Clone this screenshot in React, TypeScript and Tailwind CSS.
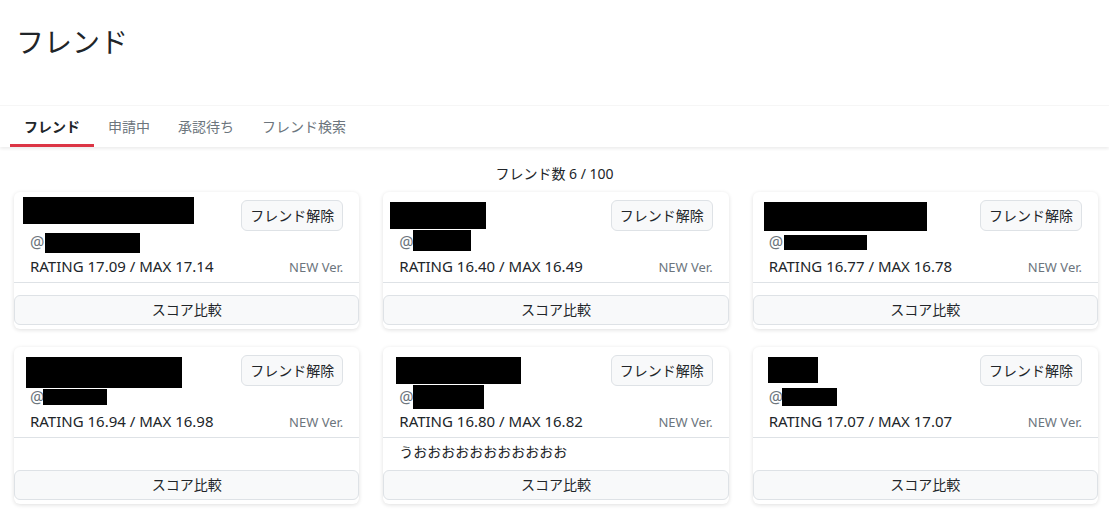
import React from "react";

type Friend = {
  rating: string;
  max: string;
  comment?: string;
  // redaction boxes, relative to card
  nameBox: [number, number, number, number];
  idBox: [number, number, number, number];
};

const friends: Friend[] = [
  { rating: "17.09", max: "17.14", nameBox: [9, 5, 171, 27], idBox: [31, 41, 95, 20] },
  { rating: "16.40", max: "16.49", nameBox: [7, 10, 96, 27], idBox: [30, 38, 58, 21] },
  { rating: "16.77", max: "16.78", nameBox: [11, 10, 163, 29], idBox: [31, 43, 83, 15] },
  { rating: "16.94", max: "16.98", nameBox: [12, 10, 156, 31], idBox: [29, 42, 64, 16] },
  {
    rating: "16.80",
    max: "16.82",
    comment: "うおおおおおおおおおおお",
    nameBox: [13, 10, 125, 27],
    idBox: [30, 38, 71, 24],
  },
  { rating: "17.07", max: "17.07", nameBox: [15, 10, 50, 26], idBox: [29, 41, 55, 18] },
];

const tabs = ["フレンド", "申請中", "承認待ち", "フレンド検索"];

function FriendCard({ f }: { f: Friend }) {
  return (
    <div className="relative flex flex-col rounded-md bg-white pb-1 shadow-[0_1px_4px_rgba(0,0,0,0.13)]">
      {/* header */}
      <div className="flex justify-between px-4 pt-2 pb-1">
        <div className="flex flex-col">
          <div className="h-[30px]" />
          <div className="text-base leading-6 text-[#6c757d]">@</div>
          <div className="text-[15px] leading-6 text-[#212529]">
            RATING {f.rating} / MAX {f.max}
          </div>
        </div>
        <div className="flex flex-col items-end justify-between">
          <button className="h-[31px] rounded-md border border-[#dee2e6] bg-[#f8f9fa] px-[8px] text-sm text-[#212529]">
            フレンド解除
          </button>
          <div className="pb-[1px] text-[13px] leading-5 text-[#6c757d]">NEW Ver.</div>
        </div>
      </div>
      <div className="h-px bg-[#dee2e6]" />
      <div className="flex-1 px-4 pt-1 pb-2 text-sm leading-5 text-[#212529]">{f.comment}</div>
      <button className="h-[30px] w-full rounded-md border border-[#dee2e6] bg-[#f8f9fa] text-sm text-[#212529]">
        スコア比較
      </button>

      {/* redaction overlays */}
      <div
        className="absolute bg-black"
        style={{ left: f.nameBox[0], top: f.nameBox[1], width: f.nameBox[2], height: f.nameBox[3] }}
      />
      <div
        className="absolute bg-black"
        style={{ left: f.idBox[0], top: f.idBox[1], width: f.idBox[2], height: f.idBox[3] }}
      />
    </div>
  );
}

export default function App() {
  return (
    <div
      className="min-h-screen bg-white text-[#212529]"
      style={{ fontFamily: '"Noto Sans", "Noto Sans CJK JP", sans-serif' }}
    >
      <h1 className="px-4 pt-6 text-[28px] leading-9 font-normal">フレンド</h1>

      {/* tab bar */}
      <div className="mt-[45px] flex h-[42px] border-t border-[#f6f6f6] px-[10px] shadow-[0_2px_3px_rgba(0,0,0,0.07)]">
        {tabs.map((t, i) => (
          <div
            key={t}
            className={
              i === 0
                ? "flex h-full items-center border-b-[3px] border-[#dc3545] px-[14px] pt-[3px] text-sm font-bold text-[#212529]"
                : "flex h-full items-center px-[14px] text-sm text-[#6c757d]"
            }
          >
            {t}
          </div>
        ))}
      </div>

      <div className="mt-[17px] text-center text-sm leading-5">フレンド数 6 / 100</div>

      <div className="mt-2 grid grid-cols-3 gap-x-6 gap-y-[18px] pr-[11px] pl-[14px]">
        {friends.map((f, i) => (
          <FriendCard key={i} f={f} />
        ))}
      </div>
    </div>
  );
}
